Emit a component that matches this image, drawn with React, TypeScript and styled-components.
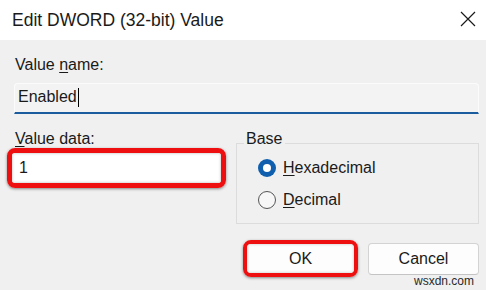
import React from "react";
import styled, { createGlobalStyle } from "styled-components";

const Global = createGlobalStyle`
  html, body { margin: 0; padding: 0; }
  body {
    width: 486px;
    height: 290px;
    overflow: hidden;
    background: #f0f0f0;
    font-family: "Liberation Sans", Arial, sans-serif;
    color: #1a1a1a;
  }
`;

const Dialog = styled.div`
  position: relative;
  width: 486px;
  height: 290px;
  background: #f0f0f0;
  display: flex;
  flex-direction: column;
`;

const TitleBar = styled.div`
  height: 40px;
  background: #ffffff;
  display: flex;
  align-items: center;
  justify-content: space-between;
  padding: 0 10px 0 12px;
`;

const Title = styled.div`
  font-size: 17.5px;
  line-height: 40px;
  color: #1a1a1a;
`;

const CloseButton = styled.div`
  width: 16px;
  height: 16px;
  display: flex;
  margin-top: -2px;
`;

const Content = styled.div`
  display: flex;
  flex-direction: column;
  padding: 16px 7px 0 14px;
`;

const Label = styled.div<{ $top?: number }>`
  font-size: 16px;
  line-height: 18px;
  padding-left: 1px;
  margin-top: ${(p) => p.$top ?? 0}px;
`;

const Key = styled.u`
  text-decoration-thickness: 1px;
  text-underline-offset: 2px;
`;

const NameInput = styled.div`
  margin-top: 9px;
  border: 1px solid #fbfbfb;
  border-bottom: 2px solid #1a5c9e;
  border-radius: 4px 4px 0 0;
  background: #f3f3f3;
  font-size: 16px;
  line-height: 26px;
  padding: 0 3px 2px 3px;
  box-sizing: content-box;
  height: 26px;
  display: flex;
  align-items: center;
`;

const Caret = styled.span`
  display: inline-block;
  width: 1px;
  height: 19px;
  background: #000;
  margin-left: 1px;
`;

const Row = styled.div`
  display: flex;
  align-items: flex-start;
  gap: 10px;
  margin-top: 16px;
`;

const LeftCol = styled.div`
  display: flex;
  flex-direction: column;
  width: 212px;
`;

const Highlight = styled.div<{ $w: number; $h: number; $bw: number }>`
  width: ${(p) => p.$w}px;
  height: ${(p) => p.$h}px;
  box-sizing: border-box;
  border: ${(p) => p.$bw}px solid #ee1010;
  border-radius: 8px;
  box-shadow: 0 1px 3px rgba(0, 0, 0, 0.45);
  display: flex;
  overflow: hidden;
  flex-shrink: 0;
`;

const DataHighlight = styled(Highlight)`
  margin-left: -7px;
`;

const DataInput = styled.div`
  flex: 1;
  background: #ffffff;
  box-shadow: inset 0 0 3px rgba(0, 0, 0, 0.3);
  font-size: 16px;
  line-height: 30px;
  padding-left: 7px;
`;

const GroupBox = styled.fieldset`
  margin: 1px 0 0 0;
  min-width: 0;
  flex: 1;
  border: 1px solid #dcdcdc;
  padding: 2px 0 12px 7px;
  display: flex;
  flex-direction: column;
  gap: 10px;
`;

const Legend = styled.legend`
  font-size: 16px;
  line-height: 16px;
  padding: 0 3px 8px 2px;
`;

const RadioRow = styled.div`
  display: flex;
  align-items: center;
  gap: 7px;
  height: 22px;
  margin-left: 14px;
  font-size: 16px;
  line-height: 22px;
`;

const RadioCircle = styled.span<{ $checked?: boolean }>`
  width: 18px;
  height: 18px;
  box-sizing: border-box;
  border-radius: 50%;
  display: flex;
  align-items: center;
  justify-content: center;
  background: ${(p) => (p.$checked ? "#0f5fae" : "#f7f7f7")};
  border: ${(p) => (p.$checked ? "none" : "1px solid #555555")};
`;

const RadioDot = styled.span`
  width: 8px;
  height: 8px;
  border-radius: 50%;
  background: #ffffff;
`;

const Buttons = styled.div`
  display: flex;
  justify-content: flex-end;
  align-items: center;
  gap: 10px;
  margin-top: 16px;
`;

const Button = styled.div`
  box-sizing: border-box;
  display: flex;
  align-items: center;
  justify-content: center;
  font-size: 16px;
  color: #1a1a1a;
  background: #fdfdfd;
  border-radius: 4px;
`;

const OkButton = styled(Button)`
  flex: 1;
  box-shadow: inset 0 0 3px rgba(0, 0, 0, 0.25);
  border-radius: 2px;
`;

const CancelButton = styled(Button)`
  width: 111px;
  height: 32px;
  border: 1px solid #d3d3d3;
  border-bottom-color: #c4c4c4;
`;

const Watermark = styled.div`
  position: absolute;
  right: 12px;
  bottom: 2px;
  font-size: 12px;
  line-height: 14px;
  color: #2a2a2a;
`;

export default function App() {
  return (
    <>
      <Global />
      <Dialog>
        <TitleBar>
          <Title>Edit DWORD (32-bit) Value</Title>
          <CloseButton>
            <svg width="16" height="16" viewBox="0 0 16 16">
              <path d="M1 1 L15 15 M15 1 L1 15" stroke="#1a1a1a" strokeWidth="1.2" fill="none" />
            </svg>
          </CloseButton>
        </TitleBar>
        <Content>
          <Label>
            Value <Key>n</Key>ame:
          </Label>
          <NameInput>
            Enabled
            <Caret />
          </NameInput>
          <Row>
            <LeftCol>
              <Label>
                <Key>V</Key>alue data:
              </Label>
              <DataHighlight $w={219} $h={40} $bw={5}>
                <DataInput>1</DataInput>
              </DataHighlight>
            </LeftCol>
            <GroupBox>
              <Legend>Base</Legend>
              <RadioRow>
                <RadioCircle $checked>
                  <RadioDot />
                </RadioCircle>
                <span>
                  <Key>H</Key>exadecimal
                </span>
              </RadioRow>
              <RadioRow>
                <RadioCircle />
                <span>
                  <Key>D</Key>ecimal
                </span>
              </RadioRow>
            </GroupBox>
          </Row>
          <Buttons>
            <Highlight $w={115} $h={37} $bw={4}>
              <OkButton>OK</OkButton>
            </Highlight>
            <CancelButton>Cancel</CancelButton>
          </Buttons>
        </Content>
        <Watermark>wsxdn.com</Watermark>
      </Dialog>
    </>
  );
}
